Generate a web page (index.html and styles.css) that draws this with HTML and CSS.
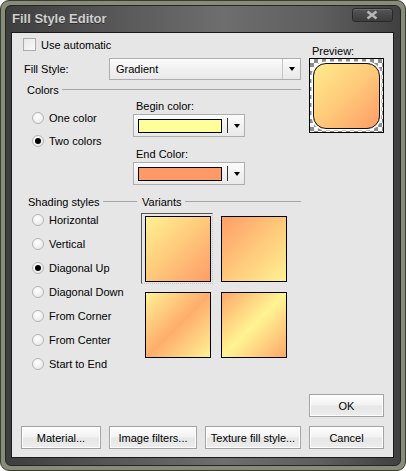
FILE: index.html
```html
<!DOCTYPE html>
<html>
<head>
<meta charset="utf-8">
<link rel="stylesheet" href="styles.css">
</head>
<body>
<div class="window">
  <div class="frame">
    <div class="titlebar">
      <span class="title">Fill Style Editor</span>
      <span class="close">
        <svg width="39" height="12" viewBox="0 0 39 12"><path d="M14.5 2.5 L23.5 9.5 M23.5 2.5 L14.5 9.5" stroke="#b4b4b4" stroke-width="2.6" fill="none"/></svg>
      </span>
    </div>
    <div class="client">
      <div class="upper">
        <div class="left">
          <div class="check-row"><span class="checkbox"></span><span>Use automatic</span></div>
          <div class="fill-row">
            <span class="fill-label">Fill Style:</span>
            <div class="combo combo-fill">
              <span class="combo-text">Gradient</span>
              <span class="combo-btn"><i class="arrow"></i></span>
            </div>
          </div>
          <div class="group-head colors-head"><span>Colors</span><span class="rule"></span></div>
          <div class="colors-body">
            <div class="radio-col">
              <div class="radio-row short"><span class="radio"></span>One color</div>
              <div class="radio-row short"><span class="radio on"></span>Two colors</div>
            </div>
            <div class="color-col">
              <div class="color-label">Begin color:</div>
              <div class="combo combo-color"><span class="swatch begin"></span><span class="sep"></span><i class="arrow"></i></div>
              <div class="color-label end">End Color:</div>
              <div class="combo combo-color"><span class="swatch finish"></span><span class="sep"></span><i class="arrow"></i></div>
            </div>
          </div>
        </div>
        <div class="preview-col">
          <div class="preview-label">Preview:</div>
          <div class="preview-box"><div class="preview-shape"></div></div>
        </div>
      </div>
      <div class="shading">
        <div class="shading-heads">
          <div class="group-head shade-head"><span>Shading styles</span><span class="rule"></span></div>
          <div class="group-head var-head"><span>Variants</span><span class="rule"></span></div>
        </div>
        <div class="shading-body">
          <div class="radio-list">
            <div class="radio-row"><span class="radio"></span>Horizontal</div>
            <div class="radio-row"><span class="radio"></span>Vertical</div>
            <div class="radio-row"><span class="radio on"></span>Diagonal Up</div>
            <div class="radio-row"><span class="radio"></span>Diagonal Down</div>
            <div class="radio-row"><span class="radio"></span>From Corner</div>
            <div class="radio-row"><span class="radio"></span>From Center</div>
            <div class="radio-row"><span class="radio"></span>Start to End</div>
          </div>
          <div class="variants">
            <div class="var v1 selected"></div>
            <div class="var v2"></div>
            <div class="var v3"></div>
            <div class="var v4"></div>
          </div>
        </div>
      </div>
      <div class="buttons">
        <div class="ok-row"><div class="btn b-ok">OK</div></div>
        <div class="btn-row">
          <div class="btn b-mat">Material...</div>
          <div class="btn b-img">Image filters...</div>
          <div class="btn b-tex">Texture fill style...</div>
          <div class="btn b-ok">Cancel</div>
        </div>
      </div>
    </div>
  </div>
</div>
</body>
</html>
```

FILE: styles.css
```css
* { box-sizing: border-box; }
body {
  margin: 0;
  background: #ffffff;
  font-family: "Liberation Sans", Arial, sans-serif;
  font-size: 11px;
  color: #000;
}
.window {
  width: 406px;
  height: 471px;
  background: #868c76;
  border: 1px solid #3a3a3a;
  border-radius: 9px;
  padding: 4px;
}
.frame {
  height: 100%;
  border: 1px solid #262626;
  border-radius: 6px;
  padding: 0 6px 7px 5px;
  background: linear-gradient(90deg, #3e3e3e 0%, #555555 25%, #6e6e6e 55%, #5e5e5e 80%, #404040 100%);
  display: flex;
  flex-direction: column;
}
.titlebar {
  height: 26px;
  display: flex;
  justify-content: space-between;
  align-items: flex-start;
}
.title {
  font-weight: bold;
  font-size: 13px;
  line-height: 26px;
  padding-left: 1px;
  color: #cfcfcf;
  text-shadow: 0 1px 0 #2e2e2e;
}
.close {
  width: 41px;
  height: 14px;
  margin-top: 2px;
  margin-right: 1px;
  border: 1px solid #2a2a2a;
  border-radius: 3px;
  background: linear-gradient(#555555, #3c3c3c);
  box-shadow: inset 0 1px 0 #6c6c6c;
  display: flex;
}
.client {
  width: 383px;
  height: 426px;
  background: #e6e6e6;
  border: 1px solid #1a1a1a;
  display: flex;
  flex-direction: column;
}
.upper { display: flex; }
.left { width: 289px; }
.check-row {
  margin-top: 5px;
  padding-left: 11px;
  height: 13px;
  display: flex;
  align-items: center;
  gap: 5px;
}
.checkbox {
  width: 13px;
  height: 13px;
  border: 1px solid #ababab;
  background: linear-gradient(135deg, #e8e8e8, #fafafa);
}
.fill-row {
  margin-top: 7px;
  height: 22px;
  display: flex;
  align-items: center;
}
.fill-label { width: 97px; padding-left: 12px; }
.combo {
  border: 1px solid #adadad;
  background: linear-gradient(#fbfbfb, #f0f0f0 60%, #e9e9e9);
  display: flex;
  align-items: center;
}
.combo-fill { flex: 1; height: 22px; }
.combo-text { flex: 1; padding-left: 6px; }
.combo-btn {
  width: 18px;
  height: 20px;
  border-left: 1px solid #c6c6c6;
  display: flex;
  align-items: center;
  justify-content: center;
}
.arrow {
  width: 0;
  height: 0;
  border-left: 3.5px solid transparent;
  border-right: 3.5px solid transparent;
  border-top: 4px solid #000;
}
.group-head {
  height: 13px;
  display: flex;
  align-items: center;
}
.rule {
  flex: 1;
  height: 1px;
  margin-left: 3px;
  background: #a6a6a6;
}
.colors-head { margin-top: 3px; padding-left: 15px; }
.colors-body { display: flex; }
.radio-col { margin-left: 20px; width: 101px; padding-top: 10px; }
.radio-row {
  height: 24px;
  display: flex;
  align-items: center;
  gap: 5px;
}
.radio-row.short { height: 23px; }
.radio {
  width: 12px;
  height: 12px;
  border-radius: 50%;
  border: 1px solid #b4b4b4;
  background: radial-gradient(circle at 40% 35%, #ffffff, #ececec 70%, #dedede);
  display: flex;
  align-items: center;
  justify-content: center;
}
.radio.on::after {
  content: "";
  width: 6px;
  height: 6px;
  border-radius: 50%;
  background: #000;
}
.color-label { margin-top: 4px; line-height: 13px; padding-left: 3px; }
.color-label.end { margin-top: 11px; }
.combo-color {
  margin-top: 1px;
  width: 112px;
  height: 23px;
  padding-left: 4px;
}
.swatch {
  width: 84px;
  height: 14px;
  border: 1px solid #000;
}
.swatch.begin { background: #ffff99; }
.swatch.finish { background: #ff9966; }
.sep {
  width: 1px;
  height: 15px;
  margin: 0 6px 0 5px;
  background: #333;
}
.preview-col { margin-left: 8px; }
.preview-label { padding-top: 12px; padding-left: 3px; line-height: 13px; }
.preview-box {
  width: 75px;
  height: 75px;
  border: 1px solid #000;
  padding: 4px 3px 3px 3px;
  background-image: conic-gradient(#8c8c8c 25%, #ffffff 0 50%, #8c8c8c 0 75%, #ffffff 0);
  background-size: 8px 8px;
}
.preview-shape {
  width: 67px;
  height: 66px;
  border: 1px solid #111;
  border-radius: 13px;
  background: linear-gradient(to bottom right, #ffec8c, #ffc97a 50%, #ff9c66);
  box-shadow: 0 0 0 1.5px #ffffff;
}
.shading { margin-top: 10px; }
.shading-heads { display: flex; }
.shade-head { margin-left: 16px; width: 109px; }
.var-head { margin-left: 5px; width: 159px; }
.shading-body { display: flex; }
.radio-list { margin-left: 20px; width: 113px; }
.variants {
  margin-top: 8px;
  display: grid;
  grid-template-columns: 66px 66px;
  grid-template-rows: 66px 66px;
  gap: 10px;
  align-self: flex-start;
}
.var {
  border: 1px solid #000;
  position: relative;
}
.v1 { background: linear-gradient(to bottom right, #fff193, #ffc87a 50%, #ff9d68); }
.v2 { background: linear-gradient(to bottom right, #ff9d68, #ffc87a 50%, #fff193); }
.v3 { background: linear-gradient(to bottom right, #fff193, #ffad6c 50%, #fff193); }
.v4 { background: linear-gradient(to bottom right, #ffa86a, #fff493 50%, #ffa86a); }
.selected::before {
  content: "";
  position: absolute;
  top: -4px;
  left: -5px;
  right: -3px;
  bottom: -3px;
  border-top: 1px solid #555;
  border-left: 1px solid #555;
  border-right: 1px dotted #c4c4c4;
  border-bottom: 1px dotted #c4c4c4;
}
.buttons {
  margin-top: auto;
  padding-bottom: 8px;
  display: flex;
  flex-direction: column;
  gap: 9px;
}
.ok-row { display: flex; justify-content: flex-end; padding-right: 9px; }
.btn-row { display: flex; gap: 8px; padding-left: 9px; }
.btn {
  height: 23px;
  border: 1px solid #a3a3a3;
  background: linear-gradient(#fdfdfd, #f3f3f3 45%, #e6e6e6 55%, #ededed);
  box-shadow: inset 0 0 0 1px #ffffff;
  display: flex;
  align-items: center;
  justify-content: center;
}
.b-ok { width: 75px; }
.b-mat { width: 80px; }
.b-img { width: 88px; }
.b-tex { width: 96px; }
```
